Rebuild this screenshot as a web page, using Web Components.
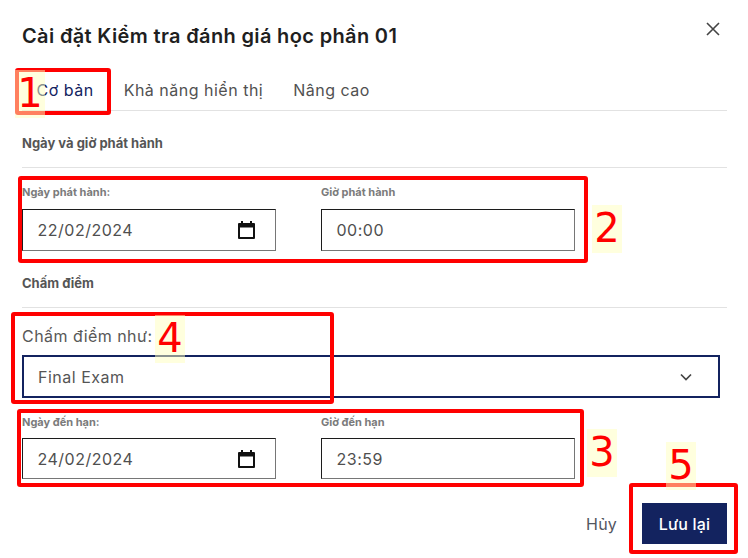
<!DOCTYPE html>
<html lang="vi">
<head>
<meta charset="utf-8">
<style>
html, body { margin: 0; background: #fff; }
body { font-family: Inter, "Noto Sans", sans-serif; }
</style>
</head>
<body>
<settings-dialog></settings-dialog>
<script>
class TabBar extends HTMLElement {
    constructor() {
        super();
        this.attachShadow({mode: 'open'}).innerHTML = `<style>
:host { display: flex; gap: 30px; height: 41px; padding-left: 14.5px; border-bottom: 1px solid #e2e2e2; box-sizing: content-box; }
span { font-size: 16px; letter-spacing: .5px; line-height: 43px; color: #515151; }
span.active { color: #13235f; }
</style>
<span class="active">Cơ bản</span><span>Khả năng hiển thị</span><span>Nâng cao</span>`;
    }
}
customElements.define('tab-bar', TabBar);

class SectionHead extends HTMLElement {
    constructor() {
        super();
        this.attachShadow({mode: 'open'}).innerHTML = `<style>
:host { display: block; height: 57px; padding-top: 24px; border-bottom: 1px solid #e2e2e2; font-size: 13px; font-weight: 700; color: #555; line-height: 16px; box-sizing: border-box; }
</style><slot></slot>`;
    }
}
customElements.define('section-head', SectionHead);

class FieldBox extends HTMLElement {
    constructor() {
        super();
        this.attachShadow({mode: 'open'}).innerHTML = `<style>
:host { display: block; width: 254px; }
label { display: block; font-size: 11px; font-weight: 700; color: #7b7b7b; line-height: 14px; height: var(--label-h, 24px); }
.box { box-sizing: border-box; height: var(--box-h, 42px); display: flex; align-items: center; justify-content: space-between; padding: 0 20px 0 14.5px; border: 1px solid; border-color: #1c1c1c #767676 #767676 #1c1c1c; font-size: 16px; letter-spacing: .5px; color: #4f4f4f; }
svg { display: block; }
</style>
<label></label>
<div class="box"><span class="val"></span></div>`;
    }
    connectedCallback() {
        this.shadowRoot.querySelector('label').textContent = this.getAttribute('label');
        this.shadowRoot.querySelector('.val').textContent = this.getAttribute('value');
        if (this.hasAttribute('calendar')) {
            this.shadowRoot.querySelector('.box').insertAdjacentHTML('beforeend',
                `<svg width="17" height="18" viewBox="0 0 17 18"><path d="M3 0h2v2h7V0h2v2h2a1 1 0 0 1 1 1v14a1 1 0 0 1-1 1H1a1 1 0 0 1-1-1V3a1 1 0 0 1 1-1h2zM2 6.5V16h13V6.5z" fill="#111" fill-rule="evenodd"/></svg>`);
        }
    }
}
customElements.define('field-box', FieldBox);

class FieldRow extends HTMLElement {
    constructor() {
        super();
        this.attachShadow({mode: 'open'}).innerHTML = `<style>
:host { display: flex; gap: 45px; }
</style><slot></slot>`;
    }
}
customElements.define('field-row', FieldRow);

class SelectField extends HTMLElement {
    constructor() {
        super();
        this.attachShadow({mode: 'open'}).innerHTML = `<style>
:host { display: block; }
label { display: block; font-size: 16px; letter-spacing: .45px; line-height: 20px; height: 29px; color: #585858; }
.box { box-sizing: border-box; width: 698px; height: 43px; border: 2px solid #13235f; display: flex; align-items: center; justify-content: space-between; padding: 0 26px 0 14px; font-size: 16px; letter-spacing: .5px; color: #555; }
</style>
<label>Chấm điểm như:</label>
<div class="box"><span>Final Exam</span><svg width="12" height="8" viewBox="0 0 12 8"><path d="M1 1.5l5 5 5-5" fill="none" stroke="#444" stroke-width="1.7"/></svg></div>`;
    }
}
customElements.define('select-field', SelectField);

class MarkBox extends HTMLElement {
    constructor() {
        super();
        this.attachShadow({mode: 'open'}).innerHTML = `<style>
:host { position: absolute; box-sizing: border-box; border: 4px solid #f00; border-radius: 3px; }
</style>`;
    }
    connectedCallback() {
        const [x, y, w, h] = this.getAttribute('rect').split(',');
        this.style.cssText = `left:${x}px;top:${y}px;width:${w}px;height:${h}px`;
    }
}
customElements.define('mark-box', MarkBox);

class MarkNum extends HTMLElement {
    constructor() {
        super();
        this.attachShadow({mode: 'open'}).innerHTML = `<style>
:host { position: absolute; width: 30px; height: 48px; background: rgba(255,255,190,.5); color: #f00; font-family: "DejaVu Sans", sans-serif; font-size: 40px; line-height: 47px; text-align: center; }
</style><slot></slot>`;
    }
    connectedCallback() {
        const [x, y] = this.getAttribute('at').split(',');
        this.style.left = x + 'px';
        this.style.top = y + 'px';
    }
}
customElements.define('mark-num', MarkNum);

class SettingsDialog extends HTMLElement {
    constructor() {
        super();
        this.attachShadow({mode: 'open'}).innerHTML = `<style>
:host { display: block; position: relative; width: 748px; height: 558px; overflow: hidden; background: #fff; box-sizing: border-box; padding: 0 21px 0 22px; }
header { display: flex; justify-content: space-between; align-items: center; height: 69px; }
h1 { margin: 0; padding-top: 2px; font-size: 20px; font-weight: 600; color: #1f1f1f; letter-spacing: .35px; }
.close { margin: 0 7px 12px 0; display: block; }
field-row { margin-top: 17px; }
select-field { margin-top: 18px; }
field-row.due { margin-top: 17px; --label-h: 23px; --box-h: 41px; }
footer { display: flex; justify-content: flex-end; align-items: center; gap: 25px; margin-top: 24px; }
.cancel { font-size: 16px; letter-spacing: .2px; color: #53565f; }
.save { width: 85px; height: 41px; background: #13235f; color: #fff; font-size: 16px; letter-spacing: .2px; font-weight: 500; display: flex; align-items: center; justify-content: center; }
</style>
<header>
  <h1>Cài đặt Kiểm tra đánh giá học phần 01</h1>
  <svg class="close" width="14" height="14" viewBox="0 0 14 14"><path d="M1 1l12 12M13 1L1 13" stroke="#444" stroke-width="1.6" fill="none"/></svg>
</header>
<tab-bar></tab-bar>
<section-head>Ngày và giờ phát hành</section-head>
<field-row>
  <field-box label="Ngày phát hành:" value="22/02/2024" calendar></field-box>
  <field-box label="Giờ phát hành" value="00:00"></field-box>
</field-row>
<section-head>Chấm điểm</section-head>
<select-field></select-field>
<field-row class="due">
  <field-box label="Ngày đến hạn:" value="24/02/2024" calendar></field-box>
  <field-box label="Giờ đến hạn" value="23:59"></field-box>
</field-row>
<footer>
  <span class="cancel">Hủy</span>
  <span class="save">Lưu lại</span>
</footer>
<mark-box rect="15,68,96,47"></mark-box>
<mark-box rect="18,176,570,87"></mark-box>
<mark-box rect="11,312,323,92"></mark-box>
<mark-box rect="17,409,567,78"></mark-box>
<mark-box rect="629,483,109,71"></mark-box>
<mark-num at="15,70">1</mark-num>
<mark-num at="592,205">2</mark-num>
<mark-num at="587,429">3</mark-num>
<mark-num at="155,315">4</mark-num>
<mark-num at="666,442">5</mark-num>`;
    }
}
customElements.define('settings-dialog', SettingsDialog);
</script>
</body>
</html>
